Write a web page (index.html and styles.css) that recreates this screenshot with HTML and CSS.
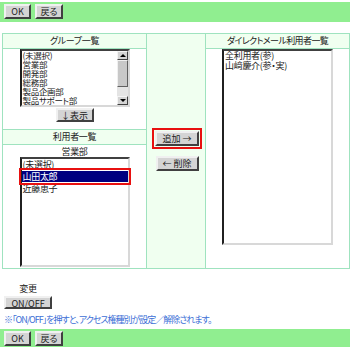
FILE: index.html
```html
<!DOCTYPE html>
<html lang="ja">
<head>
    <meta charset="UTF-8">
    <title>ダイレクトメール利用者設定</title>
    <link rel="stylesheet" href="styles.css">
</head>
<body>
    <div class="bar">
        <button class="btn btn-ok">OK</button>
        <button class="btn btn-back">戻る</button>
    </div>

    <table class="member-table">
        <tr>
            <th class="head">グループ一覧</th>
            <td class="middle" rowspan="4">
                <div class="move-buttons">
                    <button class="btn btn-add">追加 →</button>
                    <button class="btn btn-del">← 削除</button>
                </div>
            </td>
            <th class="head dm-head">ダイレクトメール利用者一覧</th>
        </tr>
        <tr>
            <td class="cell group-cell">
                <div class="listbox group-list">
                    <div class="list-items">
                        <div class="item">(未選択)</div>
                        <div class="item">営業部</div>
                        <div class="item">開発部</div>
                        <div class="item">総務部</div>
                        <div class="item">製品企画部</div>
                        <div class="item">製品サポート部</div>
                    </div>
                    <div class="scrollbar">
                        <div class="sb-btn sb-up"></div>
                        <div class="sb-thumb"></div>
                        <div class="sb-track"></div>
                        <div class="sb-btn sb-down"></div>
                    </div>
                </div>
                <button class="btn btn-show">↓表示</button>
            </td>
            <td class="cell dm-cell" rowspan="3">
                <div class="listbox dm-list">
                    <div class="item">全利用者(参)</div>
                    <div class="item">山﨑慶介(参・実)</div>
                </div>
            </td>
        </tr>
        <tr>
            <th class="head">利用者一覧</th>
        </tr>
        <tr>
            <td class="cell user-cell">
                <div class="group-name">営業部</div>
                <div class="listbox user-list">
                    <div class="item">(未選択)</div>
                    <div class="item selected">山田太郎</div>
                    <div class="item">近藤恵子</div>
                </div>
            </td>
        </tr>
    </table>

    <div class="change-box">
        <div class="change-label">変更</div>
        <button class="btn btn-onoff">ON/OFF</button>
    </div>
    <p class="note">※「ON/OFF」を押すと、アクセス権種別が設定／解除されます。</p>

    <div class="bar bar-bottom">
        <button class="btn btn-ok">OK</button>
        <button class="btn btn-back">戻る</button>
    </div>
</body>
</html>
```

FILE: styles.css
```css
body {
    margin: 0;
    font-family: "Noto Sans CJK JP", "Noto Sans", sans-serif;
    font-size: 9px;
    font-feature-settings: "palt" 1;
    letter-spacing: -0.3px;
    color: #222;
    background: #fff;
}
.bar {
    margin-top: 2px;
    height: 20px;
    box-sizing: border-box;
    padding: 2px 4px;
    display: flex;
    gap: 4px;
    background: #90ee90;
}
.bar-bottom {
    margin-top: 3px;
    height: 18px;
    padding: 2px 4px 1px;
}
.btn {
    font-family: inherit;
    font-size: 9px;
    font-feature-settings: "palt" 1;
    color: #222;
    background: #d4d4d4;
    border: 2px solid;
    border-color: #f0f0f0 #404040 #404040 #f0f0f0;
    padding: 0;
    height: 15px;
    line-height: 11px;
    cursor: pointer;
}
.btn-ok {
    width: 27px;
}
.btn-back {
    width: 28px;
}
.member-table {
    margin: 11px 2px 0;
    width: 346px;
    border-collapse: collapse;
    table-layout: fixed;
}
.member-table td,
.member-table th {
    border: 1px solid #9fe3bf;
    padding: 0;
}
.head {
    width: 143px;
    height: 14px;
    background: #f0fff0;
    font-weight: normal;
    text-align: center;
    line-height: 14px;
}
.dm-head {
    letter-spacing: -0.6px;
}
.middle {
    width: 58px;
    background: #f0fff0;
    vertical-align: middle;
}
.move-buttons {
    display: flex;
    flex-direction: column;
    align-items: center;
    gap: 10px;
    padding-left: 2px;
}
.btn-add {
    width: 44px;
    outline: 2px solid #e81010;
    outline-offset: 1px;
}
.btn-del {
    width: 43px;
}
.cell {
    background: #fff;
    text-align: center;
    vertical-align: top;
}
.group-cell {
    height: 80px;
    padding-top: 4px;
}
.listbox {
    box-sizing: border-box;
    border: 2px solid;
    border-color: #404040 #d8d8d8 #d8d8d8 #202020;
    background: #fff;
    text-align: left;
    margin: 0 auto;
}
.item {
    height: 10px;
    line-height: 10px;
    padding-left: 1px;
    white-space: nowrap;
}
.group-list {
    width: 110px;
    height: 58px;
    display: flex;
}
.list-items {
    flex: 1;
}
.group-list .item {
    height: 9px;
    line-height: 9px;
    font-size: 8.5px;
}
.scrollbar {
    width: 11px;
    display: flex;
    flex-direction: column;
    background: #e4e4e4;
}
.sb-btn {
    height: 9px;
    box-sizing: border-box;
    background: #d4d4d4;
    border: 1px solid;
    border-color: #f4f4f4 #404040 #404040 #f4f4f4;
    position: relative;
}
.sb-up::after,
.sb-down::after {
    content: "";
    position: absolute;
    left: 2px;
    top: 2px;
    border-left: 3px solid transparent;
    border-right: 3px solid transparent;
}
.sb-up::after {
    border-bottom: 3px solid #000;
}
.sb-down::after {
    border-top: 3px solid #000;
}
.sb-thumb {
    height: 27px;
    box-sizing: border-box;
    background: #c8c8c8;
    border: 1px solid;
    border-color: #f0f0f0 #606060 #606060 #f0f0f0;
}
.sb-track {
    flex: 1;
}
.btn-show {
    width: 38px;
    height: 14px;
    margin-top: 1px;
}
.group-name {
    height: 11px;
    line-height: 11px;
    margin-top: 1px;
}
.user-cell {
    height: 123px;
}
.user-list {
    width: 110px;
    height: 110px;
    margin-top: 0;
}
.user-list .item {
    height: 11px;
    line-height: 11px;
}
.item.selected {
    background: #000080;
    color: #fff;
    outline: 2px solid #e81010;
    outline-offset: 1px;
    position: relative;
    margin: 1px 0;
}
.dm-cell {
    padding-top: 2px;
}
.dm-list {
    width: 111px;
    height: 196px;
}
.change-box {
    width: 48px;
    margin: 13px 0 0 4px;
    display: flex;
    flex-direction: column;
    align-items: center;
}
.change-label {
    height: 13px;
    line-height: 13px;
}
.btn-onoff {
    width: 48px;
    height: 13px;
    margin-top: 1px;
    letter-spacing: 0;
}
.note {
    margin: 5px 0 0 4px;
    color: #3d6fd6;
    line-height: 12px;
    letter-spacing: -1px;
    white-space: nowrap;
}
```
